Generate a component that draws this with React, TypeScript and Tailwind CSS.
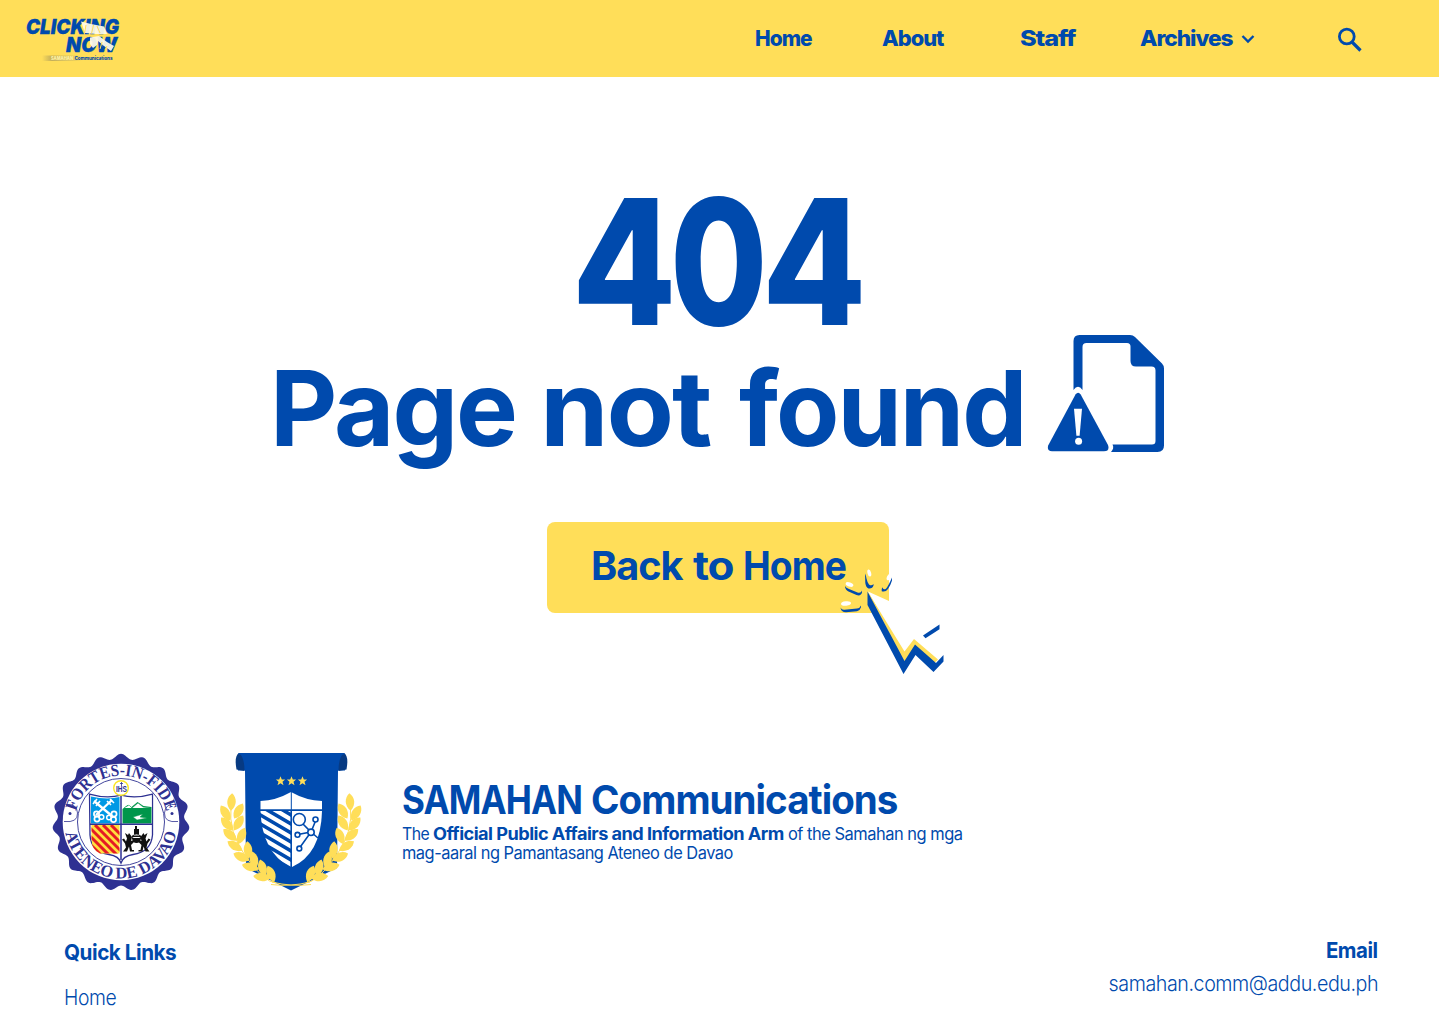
import React from "react";

const NAVY = "#2e3192";
const BLUE = "#004aad";
const GOLD = "#ffde59";

function ClickingNowLogo() {
  return (
    <svg width="100" height="50" viewBox="22 14 100 50" className="ml-[22px] mt-[14px] block shrink-0 overflow-visible">
      <defs>
        <linearGradient id="band" x1="0" x2="1">
          <stop offset="0" stopColor="#b9a65a" stopOpacity="0" />
          <stop offset="0.25" stopColor="#b9a65a" stopOpacity="0.85" />
          <stop offset="0.6" stopColor="#cdbb66" stopOpacity="0.7" />
          <stop offset="1" stopColor="#b9a65a" stopOpacity="0" />
        </linearGradient>
      </defs>
      <g fill={BLUE} fontFamily="Inter, sans-serif" fontWeight="900" fontStyle="italic" stroke={BLUE} strokeWidth="0.3">
        <text x="26" y="33.800" fontSize="20.500" textLength="93" lengthAdjust="spacingAndGlyphs">CLICKING</text>
        <text x="66" y="52" fontSize="20.500" textLength="51" lengthAdjust="spacingAndGlyphs">NOW</text>
      </g>
      <path d="M81 21.500L91 24 104 26.500 107 34 96 34 85 33zM90 37.500L99 36 107 42 114 46 111 51 104 46 98 41 97 45 93 48 90 44z" fill="#fffbe8" opacity="0.93" />
      <path d="M86 25l-1.500 8.500M93.500 25L91.500 33.500M97 26l3 7M102 42l-2 7M107 46l-2 4" stroke={GOLD} strokeWidth="1" />
      <rect x="42" y="55.500" width="40" height="5.500" fill="url(#band)" />
      <g fontFamily="Inter, sans-serif" fontWeight="800" fontSize="4.400">
        <text x="51" y="59.700" fill="#fff3a8" textLength="22" lengthAdjust="spacingAndGlyphs">SAMAHAN</text>
        <text x="74.500" y="59.700" fill={BLUE} textLength="38" lengthAdjust="spacingAndGlyphs">Communications</text>
      </g>
    </svg>
  );
}

function MissingPageIcon() {
  return (
    <svg width="118" height="120" viewBox="1047 334 118 120" fill={BLUE} className="block shrink-0">
      <path
        fillRule="evenodd"
        d="M1073.5 390V341q0-6 6-6H1130q3 0 5 2L1162 363.500q2 2 2 5V445.500q0 6.500-6.500 6.500H1111Q1114.500 448 1112.500 444.500H1152q3.500 0 3.500-3.500V370.500q0-4-4-4H1136q-5.500 0-5.500-5.500V346.500q0-3.500-3.500-3.500H1086.500q-4 0-4 4V390Q1078 383.500 1073.500 390z"
      />
      <path d="M1075.500 394.500q2.700-3.500 5.200 0L1108 445q2 6-4 6.300H1052q-5.500-.5-3.700-6z" />
      <path d="M1074 408.700h8l-2.400 27h-3.200z" fill="#fff" />
      <circle cx="1078.600" cy="441.300" r="3.500" fill="#fff" />
    </svg>
  );
}

function CursorMark() {
  return (
    <svg width="106" height="106" viewBox="839 569 106 106" className="pointer-events-none absolute left-[292px] top-[47px]">
      <path d="M868 591.500L889 601V613H880L904 655z" fill="#fff" />
      <path d="M868 592L904.500 651.500 914 639 938 659.500 933.500 664 915 646 904.500 663z" fill={GOLD} />
      <path d="M867.500 591.500V605L903.500 674 915.500 655 933.500 672 943.500 661.500V655L936 663 915 644.500 904.500 661z" fill={BLUE} />
      <path d="M923 635.500l16.500-11v4.800l-14 9z" fill={BLUE} />
      <g fill={BLUE}>
        <path d="M840.500 607.500q1 2.500 4 2.200l12.500-1.200q3-.4 4-3v1.800q-.8 3.200-4 3.900l-11 1q-5 0-5.500-4.700z" />
        <path d="M845 586q1 1.800 4 3l8.500 3.600q3.500 1 4.500-2v2q-1 3.800-5.500 2.500l-8-3.500q-3.500-2-3.500-5.600z" />
        <path d="M865 573.500q1 2 1.500 5t2.500 6q2.500 2 4.500-.6v1.600q-1 3.500-5 3-2.500-1-3.200-5.500z" />
        <path d="M892 577.500v3q-1.500 5-4 8.500-2.500 3.500-6.300 2.300-.6-2 .8-4 .5 3 3.500 1.500 2.500-3 6-11.300z" />
      </g>
      <g fill="#fff">
        <ellipse cx="846" cy="603.500" rx="5" ry="2.200" transform="rotate(-6 846 603.500)" />
        <ellipse cx="849.500" cy="584.500" rx="4" ry="2" transform="rotate(18 849.500 584.500)" />
        <ellipse cx="869.300" cy="573" rx="1.800" ry="3.600" transform="rotate(-15 869.300 573)" />
        <ellipse cx="889" cy="577" rx="2" ry="3.500" transform="rotate(25 889 577)" />
      </g>
    </svg>
  );
}

const scallop =
  "M" +
  Array.from({ length: 380 }, (_, i) => {
    const t = (i * 2 * Math.PI) / 380;
    const r = 65.9 + 2.6 * Math.cos(19 * t);
    return `${(121 + r * Math.sin(t)).toFixed(2)} ${(822.3 - r * Math.cos(t)).toFixed(2)}`;
  }).join("L") +
  "z";

function UniversitySeal() {
  return (
    <svg width="140" height="140" viewBox="51 752 140 140" className="block shrink-0">
      <defs>
        <path id="sealTop" d="M74.600 822A46.400 46.400 0 0 1 167.400 822" />
        <path id="sealBottom" d="M64.500 822A56.500 56.500 0 0 0 177.500 822" />
        <clipPath id="stripeArea"><path d="M91.500 825H119.500V853.500H100Q92 850 91.500 840z" /></clipPath>
      </defs>
      <path d={scallop} fill={NAVY} />
      <circle cx="121" cy="822" r="58.300" fill="#fff" />
      <circle cx="121" cy="822" r="43.500" fill="none" stroke={NAVY} strokeWidth="0.900" />
      <g fontFamily="Liberation Serif, serif" fontWeight="700" fill={NAVY}>
        <text fontSize="17">
          <textPath href="#sealTop" startOffset="11" textLength="124" lengthAdjust="spacingAndGlyphs">FORTES-IN-FIDE</textPath>
        </text>
        <text fontSize="16.500">
          <textPath href="#sealBottom" startOffset="11" textLength="155" lengthAdjust="spacingAndGlyphs">ATENEO DE DAVAO</textPath>
        </text>
      </g>
      <g fill="none" stroke={NAVY} strokeWidth="0.800">
        <path d="M65.500 804.500Q77 803 77.500 813T64 821.500" />
        <path d="M176.500 804.500Q165 803 164.500 813T178 821.500" />
      </g>
      <circle cx="70" cy="813.500" r="1.500" fill={NAVY} />
      <circle cx="172" cy="813.500" r="1.500" fill={NAVY} />
      <path d="M89.500 794Q107 799 121 795 135 799 152.500 794V835Q151 852 133 854.500 123 856 121 863 119 856 109 854.500 91 852 90 835z" fill="#fff" stroke={NAVY} strokeWidth="1.300" />
      <path d="M91 796.500Q107 800 119.500 797V823.500H91z" fill="#0099e5" />
      <path d="M122.500 797Q137 800 151.500 796.500V823.500H122.500z" fill="#fff" />
      <path d="M122.500 809l5-4 4 2 6-5 6 4 8 1V823.500H122.500z" fill="#00964b" />
      <path d="M124 808l5-3 3 3 6-5 5 4 7 1M133 817l10-3-3 3 7 1-10 2z" fill="#fff" stroke="#00964b" strokeWidth="0.500" />
      <g stroke="#fff" fill="none">
        <path d="M94 801L112 816M112 800L96 815" strokeWidth="2.300" />
        <path d="M93 804l4-5M96 806l4-5M110 799l4 4M107 801l4 4" strokeWidth="1.600" />
        <circle cx="96.500" cy="814" r="2.600" strokeWidth="1.700" />
        <circle cx="97" cy="819" r="2.600" strokeWidth="1.700" />
        <circle cx="101.500" cy="817" r="2.300" strokeWidth="1.500" />
        <circle cx="114" cy="814" r="2.600" strokeWidth="1.700" />
        <circle cx="113.500" cy="819.500" r="2.600" strokeWidth="1.700" />
        <circle cx="109" cy="817.500" r="2.300" strokeWidth="1.500" />
      </g>
      <g clipPath="url(#stripeArea)">
        <path d="M91 825H120V854H91z" fill="#ffdf3d" />
        <path d="M83 829L113 859M83 837L105 859M87 825L121 859M95 825L123 853M103 825L123 845M111 825L123 837" stroke="#e51b24" strokeWidth="3" />
      </g>
      <path d="M90 824.300H152M121 796V860" stroke={NAVY} strokeWidth="1.500" />
      <g fill="#111">
        <path d="M125 833l3 2 1-2 3 4-1 4 3-1v2l-3 3 1 5h2v1.500h-4l-1-5-2 5h-4l3-4-1-4-3-4 2-1 2 3 1-3z" />
        <path d="M147.500 833l-3 2-1-2-3 4 1 4-3-1v2l3 3-1 5h-2v1.500h4l1-5 2 5h4l-3-4 1-4 3-4-2-1-2 3-1-3z" />
        <path d="M132 838h9q-.5 5-4.500 5t-4.500-5M135 826h2v3h2v5h-5v-5h1zM132 835.500h9v1.500h-9z" />
      </g>
      <path d="M132.500 839q0-5 4-5t4 5" fill="none" stroke="#111" strokeWidth="0.900" />
      <circle cx="121" cy="788" r="7.300" fill="#fff" stroke="#fbe626" strokeWidth="1.400" />
      <text x="116" y="791.500" fontSize="8.500" fontFamily="Liberation Sans, sans-serif" fontWeight="700" fill={NAVY} textLength="11" lengthAdjust="spacingAndGlyphs">IHS</text>
      <path d="M121.500 782v4M120 783.500h3" stroke={NAVY} strokeWidth="0.800" />
    </svg>
  );
}

const leaves = [
  [231.5, 802, 4], [225.5, 813, -32], [238.5, 811, 30], [227, 824, -42], [238.5, 823, 32], [230, 835, -50], [241.5, 836, 22],
  [235, 846, -58], [248, 850, -5], [241.5, 857, -66], [254, 860, -12], [250.5, 867, -76], [262.5, 868, -16], [262, 877, -84], [271, 874, -22],
];

function Laurel() {
  return (
    <g fill={GOLD}>
      {leaves.map(([x, y, r], i) => (
        <path key={i} d="M0-8.800C5.300-4.500 6 3 0 8.800C-6 3-5.300-4.500 0-8.800z" transform={`translate(${x} ${y}) rotate(${r})`} />
      ))}
      <path d="M231 806Q228 832 246 857T276 883" fill="none" stroke={GOLD} strokeWidth="1" />
    </g>
  );
}

function SamahanCrest() {
  return (
    <svg width="144" height="140" viewBox="219 752 144 140" className="block shrink-0">
      <defs>
        <clipPath id="leftHalf"><path d="M260.500 811H290.500V867.500Q262 852 260.500 811z" /></clipPath>
      </defs>
      <path d="M240 753H343L345 770.500H338L337 868 291 890.500 246 868 245 770.500H238z" fill={BLUE} />
      <path d="M239 753q-5 3-2.500 16.500l8 1.500q0-14-5.500-18zM344 753q5 3 2.500 16.500l-8 1.500q0-14 5.500-18z" fill="#073a82" />
      <path d="M238.500 753.700H344.500" stroke={BLUE} strokeWidth="1.400" />
      <g fill={GOLD}>
        {[280.5, 291.5, 302.5].map((x) => (
          <path key={x} transform={`translate(${x} 781)`} d="M0-4.800L1.300-1.500 4.600-1.400 2 .8 3 4.200 0 2.200-3 4.200-2 .8-4.600-1.400-1.300-1.500z" />
        ))}
      </g>
      <path d="M291 792Q306 800.500 322 801V809.300H260.500V801Q276 800.500 291 792z" fill="#fff" />
      <path d="M292 811H322Q321 854 292 867z" fill="#fff" />
      <g clipPath="url(#leftHalf)" stroke="#fff" strokeWidth="4.300">
        <path d="M256 808L292 829M256 817L292 838M256 826L292 847M256 835L292 856M256 844L292 865M264 803.500L292 820M276 801.500L292 811" />
      </g>
      <path d="M291.300 792V867" stroke={BLUE} strokeWidth="1" />
      <g fill="#fff" stroke={BLUE} strokeWidth="1.600">
        <path d="M299 820L311 832 315.500 821M298 834.500L311 832 299.500 848M311 832L318 838" />
        <circle cx="299.300" cy="819.500" r="6" />
        <circle cx="315.500" cy="819.500" r="2.500" />
        <circle cx="311" cy="832.300" r="3.200" />
        <circle cx="297.500" cy="834.800" r="2.400" />
        <circle cx="299.300" cy="848.500" r="2.400" />
      </g>
      <Laurel />
      <g transform="matrix(-1 0 0 1 581.500 0)"><Laurel /></g>
      <path d="M272 882Q292 887 311 884.500M310 882Q290 887 271 884.500" fill="none" stroke={GOLD} strokeWidth="1" />
    </svg>
  );
}

export default function App() {
  return (
    <div className="h-[1024px] w-[1440px] overflow-hidden bg-white font-['Inter',sans-serif] text-[#004aad]">
      <header className="flex h-[77px] w-[1439px] bg-[#ffde59]">
        <ClickingNowLogo />
        <nav className="ml-[633px] flex h-[77px] items-center text-[22px] font-extrabold leading-none whitespace-nowrap">
          <a className="w-[127px] pb-[2px]"><span className="inline-block origin-left scale-x-[0.95] tracking-[-1px]">Home</span></a>
          <a className="w-[138px] pb-[2px]"><span className="inline-block origin-left scale-x-[0.99] tracking-[-1px]">About</span></a>
          <a className="w-[120px] pb-[2px]"><span className="inline-block origin-left scale-x-[1.15] tracking-[-1px]">Staff</span></a>
          <a className="w-[101px] pb-[2px]"><span className="inline-block origin-left scale-x-[1.03] tracking-[-1px]">Archives</span></a>
          <svg width="14" height="10" viewBox="0 0 14 10" fill="none" stroke="currentColor" strokeWidth="2.400" className="block">
            <path d="M1.500 2L7 7.500 12.500 2" />
          </svg>
          <svg width="26" height="26" viewBox="0 0 26 26" fill="none" stroke="currentColor" strokeWidth="2.800" className="mt-[2px] ml-[82px] block">
            <circle cx="9.800" cy="9.500" r="7.400" />
            <path d="M15 15L23.500 23.500" strokeWidth="3.200" />
          </svg>
        </nav>
      </header>

      <main className="flex h-[675px] flex-col">
        <h1 className="mt-[96px] flex h-[176px] w-[1439px] items-center pl-[572px] text-[175px] font-extrabold leading-[176px]">
          <span className="w-[98px]"><span className="inline-block origin-left scale-x-[0.868]">4</span></span>
          <span className="w-[92px]"><span className="inline-block origin-left scale-x-[0.806]">0</span></span>
          <span className="w-[98px]"><span className="inline-block origin-left scale-x-[0.868]">4</span></span>
        </h1>
        <div className="mt-[-15px] flex h-[120px] items-start">
          <h2 className="flex w-[1047px] pt-[14px] pl-[270px] text-[105px] font-bold leading-[120px] whitespace-nowrap">
            <span className="w-[270px]"><span className="inline-block origin-left scale-x-[0.99] tracking-[-2px]">Page</span></span>
            <span className="w-[199px]"><span className="inline-block origin-left scale-x-[1.05] tracking-[-2px]">not</span></span>
            <span className="w-[290px]"><span className="inline-block origin-left scale-x-[0.985] tracking-[-2px]">found</span></span>
          </h2>
          <MissingPageIcon />
        </div>
        <div className="relative ml-[547px] mt-[68px] flex h-[91px] w-[342px] rounded-[8px] bg-[#ffde59] pl-[44px] text-[40px] font-bold leading-[88px] whitespace-nowrap">
          <span className="w-[102px]"><span className="inline-block origin-left scale-x-[0.99] tracking-[-1px]">Back</span></span>
          <span className="w-[50px]"><span className="inline-block origin-left scale-x-[1.1] tracking-[-1px]">to</span></span>
          <span className="w-[110px]"><span className="inline-block origin-left scale-x-[0.93] tracking-[-1px]">Home</span></span>
          <CursorMark />
        </div>
      </main>

      <footer className="flex flex-col">
        <div className="flex h-[140px] pl-[51px]">
          <UniversitySeal />
          <div className="ml-[28px]"><SamahanCrest /></div>
          <div className="ml-[39px] pt-[24px] whitespace-nowrap">
            <h3 className="flex h-[49px] text-[40px] font-bold leading-[48px]">
              <span className="w-[189px]"><span className="inline-block origin-left scale-x-[0.875] tracking-[-1px]">SAMAHAN</span></span>
              <span className="inline-block origin-left scale-x-[0.963] tracking-[-1px]">Communications</span>
            </h3>
            <p className="flex h-[19px] text-[17px] leading-[19px]">
              <span className="w-[31px]"><span className="inline-block origin-left scale-x-[0.93] tracking-[-0.5px]">The</span></span>
              <b className="w-[355px]"><span className="inline-block origin-left scale-x-[1.067] tracking-[-0.5px]">Official Public Affairs and Information Arm</span></b>
              <span className="inline-block origin-left scale-x-[0.967] tracking-[-0.5px]">of the Samahan ng mga</span>
            </p>
            <p className="h-[19px] text-[17px] leading-[19px]"><span className="inline-block origin-left scale-x-[0.964] tracking-[-0.5px]">mag-aaral ng Pamantasang Ateneo de Davao</span></p>
          </div>
        </div>
        <div className="flex justify-between pl-[64px] pr-[62px] whitespace-nowrap">
          <div className="pt-[46px]">
            <h4 className="h-[28px] text-[22px] font-bold leading-[28px]"><span className="inline-block origin-left scale-x-[0.94] tracking-[-0.5px]">Quick Links</span></h4>
            <a className="mt-[17px] block text-[22px] font-light leading-[28px]"><span className="inline-block origin-left scale-x-[0.88] tracking-[-0.5px]">Home</span></a>
          </div>
          <div className="pt-[44px] text-right">
            <h4 className="h-[28px] text-[22px] font-bold leading-[28px]"><span className="inline-block origin-right scale-x-[0.93] tracking-[-0.5px]">Email</span></h4>
            <p className="mt-[5px] text-[22px] font-light leading-[28px]"><span className="inline-block origin-right scale-x-[0.895] tracking-[-0.5px]">samahan.comm@addu.edu.ph</span></p>
          </div>
        </div>
      </footer>
    </div>
  );
}
